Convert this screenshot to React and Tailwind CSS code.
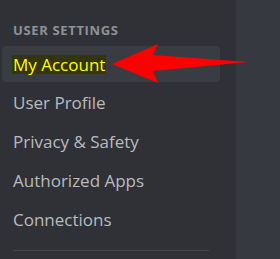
import React from 'react'

const items = ['User Profile', 'Privacy & Safety', 'Authorized Apps', 'Connections']

export default function App() {
  return (
    <div className="relative flex h-[259px] w-[280px] overflow-hidden bg-[#36393f] font-['Open_Sans',sans-serif]">
      <div className="flex w-[236px] flex-col bg-[#2f3136] pl-[2px] pr-[16px] pt-[22px]">
        <div className="pl-[11px] text-[13px] font-bold uppercase leading-[16px] tracking-[0.05em] text-[#8e9297]">
          User Settings
        </div>
        <div className="mt-[8px] flex h-[36px] items-center rounded-[4px] bg-[#393c43] pl-[10px]">
          <span className="bg-[#34350f] px-px text-[17px] leading-[19px] text-[#ffff00]">My Account</span>
        </div>
        {items.map(item => (
          <div key={item} className="mt-[3px] flex h-[36px] items-center pl-[11px] text-[17px] text-[#b9bbbe]">
            {item}
          </div>
        ))}
        <div className="ml-[11px] mt-[12px] h-px w-[196px] bg-[#42454a]" />
      </div>
      <svg className="absolute left-0 top-0" width="280" height="259" viewBox="0 0 280 259">
        <path d="M112 64 L158 44 L153 55 L248 62 L153 71 L158 83 Z" fill="#ff0000" />
      </svg>
    </div>
  )
}
